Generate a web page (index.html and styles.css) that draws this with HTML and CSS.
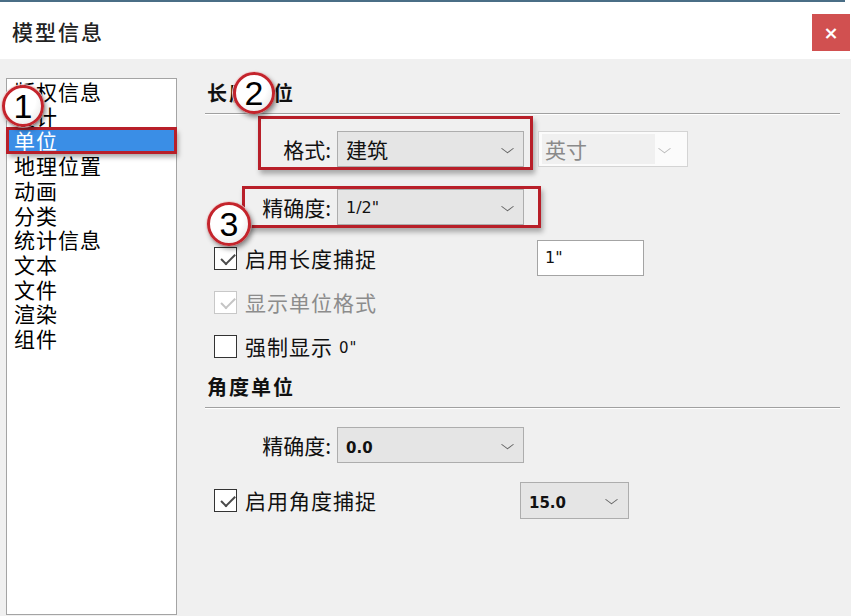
FILE: index.html
```html
<!DOCTYPE html>
<html lang="zh-CN">
<head>
  <meta charset="UTF-8" />
  <title>模型信息</title>
  <link rel="stylesheet" href="styles.css">
</head>
<body>
  <div class="frame-edge"></div>
  <div class="titlebar">
    <span class="title">模型信息</span>
    <button class="close-btn">&times;</button>
  </div>

  <div class="content">
    <ul class="nav">
      <li>版权信息</li>
      <li>设计</li>
      <li class="selected">单位</li>
      <li>地理位置</li>
      <li>动画</li>
      <li>分类</li>
      <li>统计信息</li>
      <li>文本</li>
      <li>文件</li>
      <li>渲染</li>
      <li>组件</li>
    </ul>

    <div class="panel">
      <h2 class="section-title">长度单位</h2>

      <div class="row-format">
        <div class="callout callout-format">
          <label class="field-label">格式:</label>
          <div class="select select-wide"><span class="cjk">建筑</span><i class="chevron"></i></div>
        </div>
        <div class="select select-disabled"><span class="cjk">英寸</span><i class="chevron"></i></div>
      </div>

      <div class="callout callout-precision">
        <label class="field-label">精确度:</label>
        <div class="select select-wide"><span class="latin">1/2"</span><i class="chevron"></i></div>
      </div>

      <div class="check-row">
        <span class="check-label check-wide"><span class="box checked"></span>启用长度捕捉</span>
        <div class="text-input">1"</div>
      </div>
      <div class="check-row disabled">
        <span class="check-label"><span class="box checked"></span>显示单位格式</span>
      </div>
      <div class="check-row">
        <span class="check-label"><span class="box"></span>强制显示 <span class="small-latin">0"</span></span>
      </div>

      <h2 class="section-title second">角度单位</h2>

      <div class="field-row">
        <label class="field-label">精确度:</label>
        <div class="select select-wide"><span class="latin bold">0.0</span><i class="chevron"></i></div>
      </div>

      <div class="check-row last">
        <span class="check-label check-angle"><span class="box checked"></span>启用角度捕捉</span>
        <div class="select select-small"><span class="latin bold">15.0</span><i class="chevron"></i></div>
      </div>
    </div>

    <!-- numbered callouts -->
    <span class="marker m1">1</span>
    <span class="marker m2">2</span>
    <span class="marker m3">3</span>
  </div>
</body>
</html>
```

FILE: styles.css
```css
body {
  margin: 0;
  width: 851px;
  height: 616px;
  overflow: hidden;
  background: #fff;
  font-family: "Noto Sans CJK SC", "Noto Sans", sans-serif;
  color: #111;
}

.frame-edge {
  height: 2px;
  margin-right: 6px;
  background: #4a6e86;
}

.titlebar {
  height: 57px;
  display: flex;
  align-items: center;
  justify-content: space-between;
  padding-left: 12px;
  background: #fff;
}
.title {
  font-size: 21px;
  font-weight: 500;
  letter-spacing: 2px;
  color: #222;
}
.close-btn {
  width: 38px;
  height: 37px;
  margin-top: 4px;
  margin-right: 1px;
  border: none;
  background: #d15050;
  color: #fff;
  font-family: "DejaVu Sans", sans-serif;
  font-size: 18px;
  font-weight: bold;
  line-height: 37px;
  padding: 0;
}

.content {
  position: relative;
  display: flex;
  height: 557px;
  padding: 19px 0 0 6px;
  box-sizing: border-box;
  background: #f0f0f0;
}

/* left category list */
.nav {
  list-style: none;
  margin: 0;
  padding: 0;
  width: 171px;
  height: 537px;
  box-sizing: border-box;
  border: 1px solid #a4a4a4;
  background: #fff;
}
.nav li {
  padding-left: 7px;
  font-size: 21px;
  line-height: 24.7px;
  letter-spacing: 1px;
  color: #000;
}
.nav li.selected {
  position: relative;
  background: #3a8ee6;
  color: #fff;
  outline: 3px solid #b81f29;
  outline-offset: -2px;
  box-shadow: 2px 4px 5px rgba(0, 0, 0, 0.35);
}

/* right panel */
.panel {
  width: 635px;
  margin-left: 28px;
  display: flex;
  flex-direction: column;
  align-items: flex-start;
}
.section-title {
  align-self: stretch;
  margin: 0;
  padding: 0 0 6px 2px;
  height: 36px;
  box-sizing: border-box;
  line-height: 30px;
  font-size: 20px;
  font-weight: bold;
  letter-spacing: 2px;
  border-bottom: 1px solid #a0a0a0;
  box-shadow: 0 1px 0 #fff;
}
.section-title.second {
  margin-top: 4px;
}

.field-label {
  font-size: 21px;
  line-height: 36px;
  text-align: right;
  margin-right: 6px;
  flex-shrink: 0;
}

.callout {
  display: flex;
  border: 3px solid #b81f29;
  box-shadow: 2px 4px 5px rgba(0, 0, 0, 0.3);
}

.row-format {
  display: flex;
  align-items: flex-end;
  margin-top: 2px;
  margin-left: 53px;
}
.callout-format {
  height: 54px;
  box-sizing: border-box;
  align-items: flex-end;
  padding-right: 6px;
}
.callout-format .field-label {
  width: 70px;
}
.row-format .select-disabled {
  margin-left: 5px;
  margin-bottom: 3px;
}

.callout-precision {
  margin-top: 16px;
  margin-left: 37px;
  padding-right: 14px;
}
.callout-precision .field-label {
  width: 86px;
}

.field-row {
  display: flex;
  margin-top: 19px;
  margin-left: 40px;
}
.field-row .field-label {
  width: 86px;
}

/* dropdowns */
.select {
  position: relative;
  height: 36px;
  box-sizing: border-box;
  display: flex;
  align-items: center;
  padding-left: 8px;
  background: #e5e5e5;
  border: 1px solid #adadad;
}
.select-wide {
  width: 187px;
}
.select-small {
  width: 109px;
  height: 37px;
}
.select-disabled {
  width: 150px;
  padding-left: 3px;
  background: #fbfbfb;
  border-color: #d4d4d4;
}
.select-disabled .cjk {
  width: 110px;
  padding-left: 3px;
  line-height: 30px;
  background: #f0f0f0;
  color: #8a8a8a;
}
.chevron {
  position: absolute;
  right: 11px;
  top: 12px;
  width: 8px;
  height: 8px;
  border-right: 1.5px solid #606060;
  border-bottom: 1.5px solid #606060;
  transform: scaleY(0.75) rotate(45deg);
}
.select-disabled .chevron {
  right: 18px;
  border-color: #b8b8b8;
}
.select-small .chevron {
  right: 12px;
}
.cjk {
  font-size: 21px;
}
.latin {
  font-family: "DejaVu Sans", sans-serif;
  font-size: 16px;
  color: #111;
}
.latin.bold {
  font-weight: bold;
  font-size: 15px;
  padding-top: 6px;
}

/* checkbox rows */
.check-row {
  display: flex;
  align-items: center;
  height: 44px;
  margin-left: 9px;
}
.callout-precision + .check-row {
  margin-top: 8px;
}
.check-row.last {
  margin-top: 15px;
}
.check-label {
  display: flex;
  align-items: center;
  font-size: 21px;
  letter-spacing: 1px;
}
.check-wide {
  width: 323px;
}
.check-angle {
  width: 306px;
}
.box {
  position: relative;
  width: 23px;
  height: 23px;
  box-sizing: border-box;
  margin-right: 8px;
  border: 1px solid #333;
  background: #fff;
}
.box.checked::after {
  content: "";
  position: absolute;
  left: 4px;
  top: 2px;
  width: 12px;
  height: 6px;
  border-left: 2px solid #4a4a4a;
  border-bottom: 2px solid #4a4a4a;
  transform: rotate(-45deg) translate(-1px, 4px);
}
.check-row.disabled .check-label {
  color: #8c8c8c;
}
.check-row.disabled .box {
  border-color: #c8c8c8;
}
.check-row.disabled .box.checked::after {
  border-color: #c4c4c4;
}
.small-latin {
  font-family: "DejaVu Sans", sans-serif;
  font-size: 15px;
  margin-left: 6px;
  padding-top: 4px;
}

.text-input {
  width: 107px;
  height: 36px;
  box-sizing: border-box;
  padding-left: 7px;
  border: 1px solid #a4a4a4;
  background: #fff;
  font-family: "DejaVu Sans", sans-serif;
  font-size: 16px;
  line-height: 34px;
}

/* numbered markers laid over the dialog */
.marker {
  position: absolute;
  width: 42px;
  height: 42px;
  box-sizing: border-box;
  border: 3px solid #c4242c;
  border-radius: 50%;
  background: radial-gradient(circle at 40% 35%, #fff 50%, #ececec 80%, #f2c6c6 100%);
  box-shadow: 2px 3px 5px rgba(0, 0, 0, 0.45), 0 0 0 1px #f7d8d8;
  font-family: "Liberation Sans", sans-serif;
  font-size: 34px;
  line-height: 36px;
  text-align: center;
  color: #000;
}
.m1 { left: 2px; top: 26px; }
.m2 { left: 233px; top: 13px; }
.m3 { left: 207px; top: 143px; width: 44px; height: 44px; line-height: 38px; }
```
